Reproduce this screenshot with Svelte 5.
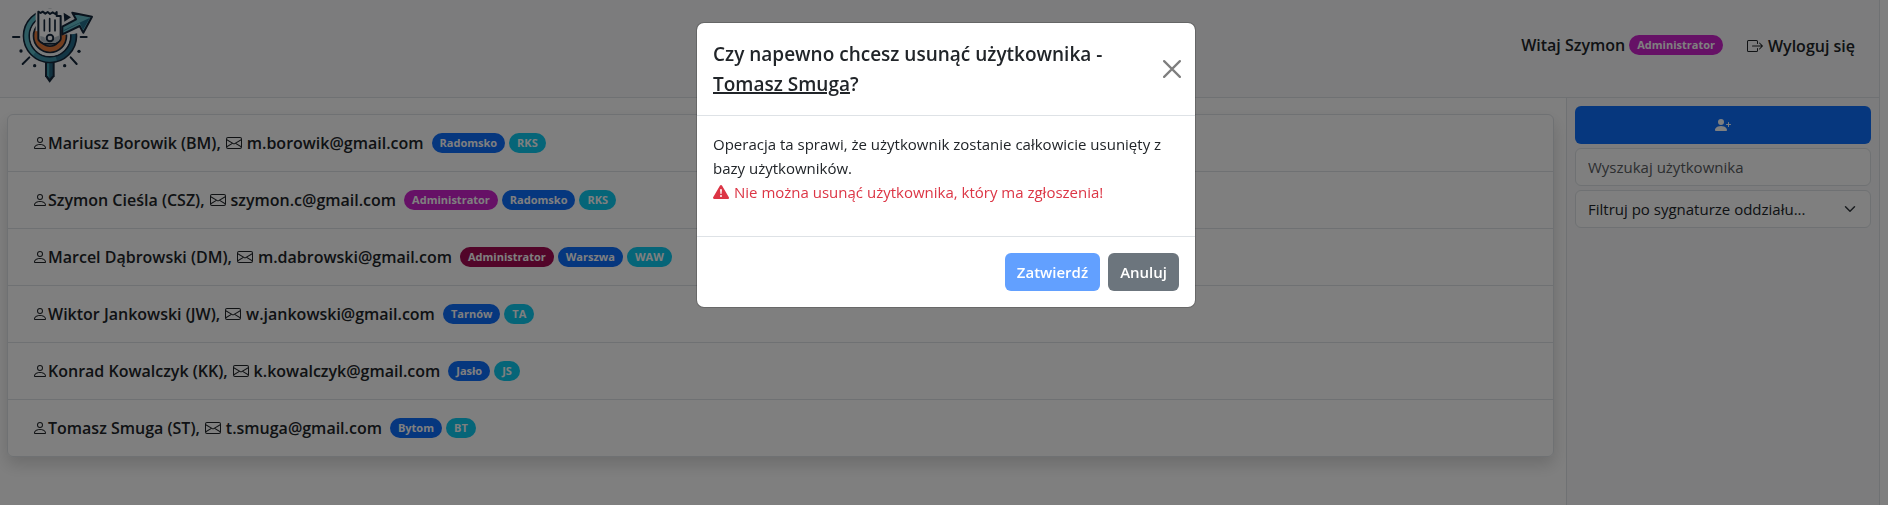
<script>
  const users = [
    { name: 'Mariusz Borowik', sign: 'BM', email: 'm.borowik@gmail.com', role: '', city: 'Radomsko', branch: 'RKS' },
    { name: 'Szymon Cieśla', sign: 'CSZ', email: 'szymon.c@gmail.com', role: 'admin', city: 'Radomsko', branch: 'RKS' },
    { name: 'Marcel Dąbrowski', sign: 'DM', email: 'm.dabrowski@gmail.com', role: 'local', city: 'Warszwa', branch: 'WAW' },
    { name: 'Wiktor Jankowski', sign: 'JW', email: 'w.jankowski@gmail.com', role: '', city: 'Tarnów', branch: 'TA' },
    { name: 'Konrad Kowalczyk', sign: 'KK', email: 'k.kowalczyk@gmail.com', role: '', city: 'Jasło', branch: 'JS' },
    { name: 'Tomasz Smuga', sign: 'ST', email: 't.smuga@gmail.com', role: '', city: 'Bytom', branch: 'BT' }
  ];
  let query = $state('');
</script>

<div class="page">
  <header class="topbar">
    <svg class="logo" viewBox="30 24 252 243" aria-hidden="true">
      <g fill="none" stroke="#14263a">
        <path stroke-width="6" stroke-linecap="round" d="M39 111h19M242 111h18M88 172l-20 20M212 172l18 20" />
        <circle cx="150" cy="108" r="71" stroke-width="22" />
        <circle cx="150" cy="108" r="71" stroke="#256a88" stroke-width="12" />
        <path stroke="#5cb8c4" stroke-width="12" d="M150 37a71 71 0 0 0-46 125" />
        <path stroke="#3f93a8" stroke-width="12" d="M103 161a71 71 0 0 0 66 15" />
        <circle cx="150" cy="108" r="56" stroke="#f4f6f7" stroke-width="6" />
        <circle cx="150" cy="108" r="40" stroke-width="24" />
        <circle cx="150" cy="108" r="40" stroke="#e47a3c" stroke-width="14" />
      </g>
      <g fill="#14263a">
        <circle cx="63" cy="153" r="5" />
        <circle cx="104" cy="197" r="5" />
        <circle cx="194" cy="197" r="5" />
        <circle cx="237" cy="154" r="5" />
      </g>
      <path fill="#f8f9fa" d="M107 26h80l95-2v64l-60 14-34 2v-14l-81 4z" />
      <path fill="#14263a" d="M191 38l22 14-20 13z" />
      <path fill="#14263a" d="M135 186h29v43l-15 19-14-19z" />
      <path fill="#3f9dae" d="M141 190h8v46l-8-10z" />
      <path fill="#23637e" d="M149 190h9v36l-9 10z" />
      <path fill="#66bcc8" stroke="#14263a" stroke-width="6" stroke-linejoin="round" d="M187 80l41-22-11-20 59 12-26 48-11-20-52 25z" />
      <path fill="#26708c" d="M190 94l49-25 10 20 21-36-78 37z" />
      <path fill="#fff" stroke="#14263a" stroke-width="6" stroke-linejoin="round" d="M115 35l7 4 6-4 8 6 7-5 7 6 8-5 8 5 4-6v12h12v68c0 8-9 11-15 15h-37c-7-4-15-8-15-15z" />
      <path fill="none" stroke="#14263a" stroke-width="5" stroke-linecap="round" d="M133 60v32M149 56v38M165 60v32" />
      <path fill="#b8c3ca" d="M121 108l12 3c3 17 28 18 33 0l13-5v10c0 6-8 9-12 12h-34c-6-3-12-7-12-12z" />
      <circle cx="150" cy="114" r="10" fill="#fff" stroke="#14263a" stroke-width="6" />
    </svg>
    <div class="account">
      <span class="greeting">Witaj Szymon <span class="badge admin">Administrator</span></span>
      <a class="logout" href="#logout">
        <svg class="icon" viewBox="0 0 16 16" aria-hidden="true">
          <path fill-rule="evenodd" d="M10 12.5a.5.5 0 0 1-.5.5h-8a.5.5 0 0 1-.5-.5v-9a.5.5 0 0 1 .5-.5h8a.5.5 0 0 1 .5.5v2a.5.5 0 0 0 1 0v-2A1.5 1.5 0 0 0 9.5 2h-8A1.5 1.5 0 0 0 0 3.5v9A1.5 1.5 0 0 0 1.5 14h8a1.5 1.5 0 0 0 1.5-1.5v-2a.5.5 0 0 0-1 0z" />
          <path fill-rule="evenodd" d="M15.854 8.354a.5.5 0 0 0 0-.708l-3-3a.5.5 0 0 0-.708.708L14.293 7.5H5.5a.5.5 0 0 0 0 1h8.793l-2.147 2.146a.5.5 0 0 0 .708.708z" />
        </svg>
        Wyloguj się
      </a>
    </div>
  </header>

  <div class="content">
    <main>
      <ul class="users">
        {#each users as user}
          <li>
            <svg class="icon" viewBox="0 0 16 16" aria-hidden="true"><path d="M8 8a3 3 0 1 0 0-6 3 3 0 0 0 0 6m2-3a2 2 0 1 1-4 0 2 2 0 0 1 4 0m4 8c0 1-1 1-1 1H3s-1 0-1-1 1-4 6-4 6 3 6 4m-1-.004c-.001-.246-.154-.986-.832-1.664C11.516 10.68 10.289 10 8 10s-3.516.68-4.168 1.332c-.678.678-.83 1.418-.832 1.664z" /></svg>
            <span>{user.name} ({user.sign}),</span>
            <svg class="icon mail" viewBox="0 0 16 16" aria-hidden="true"><path d="M0 4a2 2 0 0 1 2-2h12a2 2 0 0 1 2 2v8a2 2 0 0 1-2 2H2a2 2 0 0 1-2-2zm2-1a1 1 0 0 0-1 1v.217l7 4.2 7-4.2V4a1 1 0 0 0-1-1zm13 2.383-4.708 2.825L15 11.105zm-.034 6.876-5.64-3.471L8 9.583l-1.326-.795-5.64 3.47A1 1 0 0 0 2 13h12a1 1 0 0 0 .966-.741M1 11.105l4.708-2.897L1 5.383z" /></svg>
            <span>{user.email}</span>
            <span class="badges">
              {#if user.role}<span class="badge {user.role}">Administrator</span>{/if}
              <span class="badge city">{user.city}</span>
              <span class="badge branch">{user.branch}</span>
            </span>
          </li>
        {/each}
      </ul>
    </main>

    <aside>
      <button class="add" type="button" aria-label="Dodaj użytkownika">
        <svg class="icon" viewBox="0 0 16 16" aria-hidden="true">
          <path d="M1 14s-1 0-1-1 1-4 6-4 6 3 6 4-1 1-1 1zm5-6a3 3 0 1 0 0-6 3 3 0 0 0 0 6" />
          <path fill-rule="evenodd" d="M13.5 5a.5.5 0 0 1 .5.5V7h1.5a.5.5 0 0 1 0 1H14v1.5a.5.5 0 0 1-1 0V8h-1.5a.5.5 0 0 1 0-1H13V5.5a.5.5 0 0 1 .5-.5" />
        </svg>
      </button>
      <input class="field" type="text" placeholder="Wyszukaj użytkownika" aria-label="Wyszukaj użytkownika" bind:value={query} />
      <select class="field" aria-label="Filtruj po sygnaturze oddziału">
        <option>Filtruj po sygnaturze oddziału...</option>
      </select>
    </aside>
  </div>
</div>

<div class="backdrop">
  <div class="modal" role="dialog" aria-modal="true" aria-labelledby="modal-title">
    <div class="modal-header">
      <h1 id="modal-title">Czy napewno chcesz usunąć użytkownika - <u>Tomasz Smuga</u>?</h1>
      <button class="close" type="button" aria-label="Zamknij">
        <svg viewBox="0 0 16 16" aria-hidden="true"><path d="M1 1l14 14M15 1L1 15" /></svg>
      </button>
    </div>
    <div class="modal-body">
      <p>
        Operacja ta sprawi, że użytkownik zostanie całkowicie usunięty z bazy użytkowników.
        <span class="warning">
          <svg class="icon" viewBox="0 0 16 16" aria-hidden="true"><path d="M8.982 1.566a1.13 1.13 0 0 0-1.96 0L.165 13.233c-.457.778.091 1.767.98 1.767h13.713c.889 0 1.438-.99.98-1.767zM8 5c.535 0 .954.462.9.995l-.35 3.507a.552.552 0 0 1-1.1 0L7.1 5.995A.905.905 0 0 1 8 5m.002 6a1 1 0 1 1 0 2 1 1 0 0 1 0-2" /></svg>
          Nie można usunąć użytkownika, który ma zgłoszenia!
        </span>
      </p>
    </div>
    <div class="modal-footer">
      <button class="btn confirm" type="button" disabled>Zatwierdź</button>
      <button class="btn cancel" type="button">Anuluj</button>
    </div>
  </div>
</div>

<style>
  :global(body) {
    margin: 0;
    background: #fff;
    color: #212529;
    font: 400 15px/24px 'Open Sans', 'Noto Sans', sans-serif;
  }

  .page, .page *, .backdrop, .backdrop * { box-sizing: border-box; }

  .page {
    display: flex;
    flex-direction: column;
    min-height: 100vh;
    margin-right: 8px;
    border-right: 1px solid #dee2e6;
  }

  .topbar {
    display: flex;
    justify-content: space-between;
    padding: 8px 24px 8px 10px;
    background: #f8f9fa;
    border-bottom: 1px solid #dee2e6;
  }
  .logo { display: block; width: 84px; height: 81px; }
  .account {
    display: flex;
    align-items: center;
    gap: 24px;
    font-size: 16px;
    font-weight: 600;
    padding-bottom: 8px;
  }
  .greeting { display: flex; align-items: center; gap: 4px; }
  .logout {
    display: flex;
    align-items: center;
    gap: 5px;
    padding-top: 2px;
    color: inherit;
    text-decoration: none;
  }
  .icon { width: 16px; height: 16px; flex: none; fill: currentColor; }

  .content { display: flex; flex: 1; }
  main { flex: 1; min-width: 0; padding: 16px 12px 16px 7px; }
  .users {
    list-style: none;
    margin: 0;
    padding: 0;
    border: 1px solid #dee2e6;
    border-radius: 6px;
    box-shadow: 0 8px 16px rgba(0, 0, 0, 0.15);
  }
  .users li {
    display: flex;
    align-items: center;
    padding: 16px 24px;
    font-size: 16px;
    font-weight: 600;
  }
  .users li + li { border-top: 1px solid #dee2e6; }
  .mail { margin: 0 5px; }
  .badges { display: flex; gap: 4px; margin-left: 8px; }
  .badge {
    padding: 0 8px;
    border-radius: 10px;
    color: #fff;
    font-size: 11px;
    line-height: 20px;
    font-weight: 700;
  }
  .admin { background: #cc22cc; }
  .local { background: #a40b52; }
  .city { background: #0d6efd; }
  .branch { background: #0dcaf0; }

  aside {
    display: flex;
    flex-direction: column;
    gap: 4px;
    width: 313px;
    padding: 8px;
    background: #f8f9fa;
    border-left: 1px solid #dee2e6;
  }
  button { font: inherit; cursor: pointer; }
  .add {
    display: flex;
    align-items: center;
    justify-content: center;
    height: 38px;
    padding: 0;
    border: 0;
    border-radius: 6px;
    background: #0d6efd;
    color: #fff;
  }
  .field {
    width: 100%;
    height: 38px;
    padding: 0 12px;
    border: 1px solid #dee2e6;
    border-radius: 6px;
    background-color: #fff;
    color: #212529;
    font: inherit;
  }
  .field::placeholder { color: #595c5f; opacity: 1; }
  select.field {
    appearance: none;
    background-image: url("data:image/svg+xml,%3csvg xmlns='http://www.w3.org/2000/svg' viewBox='0 0 16 16'%3e%3cpath fill='none' stroke='%23343a40' stroke-linecap='round' stroke-linejoin='round' stroke-width='2' d='m2 5 6 6 6-6'/%3e%3c/svg%3e");
    background-repeat: no-repeat;
    background-position: right 12px center;
    background-size: 16px 12px;
  }

  .backdrop {
    position: fixed;
    inset: 0;
    display: flex;
    align-items: flex-start;
    justify-content: center;
    padding: 22px 0 0 4px;
    background: rgba(0, 0, 0, 0.5);
  }
  .modal {
    width: 100%;
    max-width: 500px;
    border: 1px solid rgba(0, 0, 0, 0.18);
    border-radius: 8px;
    background: #fff;
    background-clip: padding-box;
  }
  .modal-header {
    display: flex;
    align-items: center;
    justify-content: space-between;
    gap: 16px;
    padding: 16px;
    border-bottom: 1px solid #dee2e6;
  }
  h1 { margin: 0; font-size: 19px; line-height: 30px; font-weight: 600; }
  u { text-decoration-thickness: 2px; }
  .close {
    display: flex;
    flex: none;
    padding: 0;
    margin-right: -2px;
    border: 0;
    background: none;
    opacity: 0.5;
  }
  .close svg { width: 18px; height: 18px; fill: none; stroke: #000; stroke-width: 2; stroke-linecap: round; }
  .modal-body { padding: 16px; }
  p { margin: 0 0 16px; }
  .warning { display: flex; align-items: center; gap: 5px; color: #dc3545; }
  .modal-footer {
    display: flex;
    justify-content: flex-end;
    gap: 8px;
    padding: 16px;
    border-top: 1px solid #dee2e6;
  }
  .btn {
    height: 38px;
    padding: 0 12px;
    border: 0;
    border-radius: 6px;
    color: #fff;
    font-weight: 600;
  }
  .confirm { background: #62a0ff; }
  .cancel { background: #6c757d; }
</style>
